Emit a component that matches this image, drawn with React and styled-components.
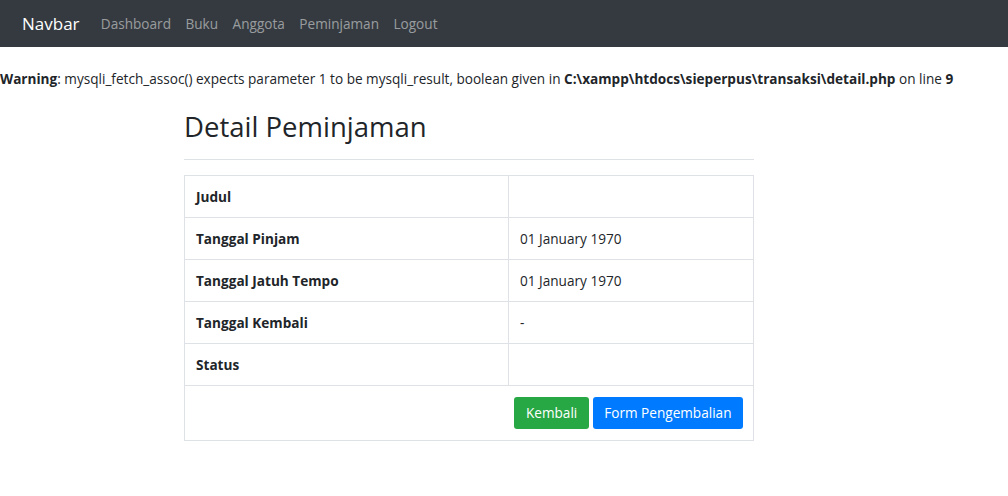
import styled, { createGlobalStyle } from "styled-components";

const GlobalStyle = createGlobalStyle`
  * { box-sizing: border-box; }
  body {
    margin: 0;
    background: #fff;
    color: #212529;
    font-family: "Open Sans", "Liberation Sans", sans-serif;
    font-size: 13.6px;
    line-height: 21px;
  }
`;

const NAV_LINKS = ["Dashboard", "Buku", "Anggota", "Peminjaman", "Logout"];

const ROWS = [
  { label: "Judul", value: "" },
  { label: "Tanggal Pinjam", value: "01 January 1970" },
  { label: "Tanggal Jatuh Tempo", value: "01 January 1970" },
  { label: "Tanggal Kembali", value: "-" },
  { label: "Status", value: "" },
];

export default function App() {
  return (
    <>
      <GlobalStyle />
      <NavbarStyled>
        <Brand>Navbar</Brand>
        <NavList>
          {NAV_LINKS.map((link) => (
            <NavLink key={link}>{link}</NavLink>
          ))}
        </NavList>
      </NavbarStyled>

      <Warning>
        <b>Warning</b>: mysqli_fetch_assoc() expects parameter 1 to be mysqli_result, boolean given in{" "}
        <b>C:\xampp\htdocs\sieperpus\transaksi\detail.php</b> on line <b>9</b>
      </Warning>

      <Content>
        <Title>Detail Peminjaman</Title>
        <Divider />
        <DetailTable>
          <tbody>
            {ROWS.map((row) => (
              <tr key={row.label}>
                <LabelCell>{row.label}</LabelCell>
                <ValueCell>{row.value}</ValueCell>
              </tr>
            ))}
            <tr>
              <ActionCell colSpan={2}>
                <ButtonBar>
                  <Button $variant="success">Kembali</Button>
                  <Button $variant="primary">Form Pengembalian</Button>
                </ButtonBar>
              </ActionCell>
            </tr>
          </tbody>
        </DetailTable>
      </Content>
    </>
  );
}

const NavbarStyled = styled.nav`
  height: 47px;
  background: #343a40;
  display: flex;
  align-items: center;
  padding: 0 0 0 22px;
`;

const Brand = styled.a`
  color: #fff;
  font-size: 17px;
  line-height: 28px;
  margin-right: 14px;
`;

const NavList = styled.div`
  display: flex;
`;

const NavLink = styled.a`
  color: rgba(255, 255, 255, 0.5);
  font-size: 13.6px;
  padding: 0 7.25px;
  cursor: pointer;
`;

const Warning = styled.div`
  margin-top: 21px;
  line-height: 21px;

  b { font-weight: 700; }
`;

const Content = styled.div`
  width: 570px;
  margin: 0 0 0 184px;
`;

const Title = styled.h2`
  margin: 20px 0 0;
  font-size: 27.5px;
  font-weight: 500;
  line-height: 36px;
`;

const Divider = styled.hr`
  margin: 14px 0 15px;
  border: 0;
  border-top: 1px solid #dee2e6;
`;

const DetailTable = styled.table`
  width: 100%;
  border-collapse: collapse;
  border: 1px solid #dee2e6;

  td {
    border: 1px solid #dee2e6;
    padding: 0 11px;
    height: 42px;
    vertical-align: middle;
  }
`;

const LabelCell = styled.td`
  width: 324px;
  font-weight: 700;
`;

const ValueCell = styled.td``;

const ActionCell = styled.td`
  && {
    height: 55px;
    padding: 0 10px 1px;
  }
`;

const ButtonBar = styled.div`
  display: flex;
  justify-content: flex-end;
  gap: 4px;
`;

const Button = styled.button`
  height: 32px;
  padding: 0 10.5px;
  border: 1px solid transparent;
  border-radius: 3px;
  font-family: inherit;
  font-size: 13.6px;
  color: #fff;
  background: ${(p) => (p.$variant === "success" ? "#28a745" : "#007bff")};
  cursor: pointer;
`;
